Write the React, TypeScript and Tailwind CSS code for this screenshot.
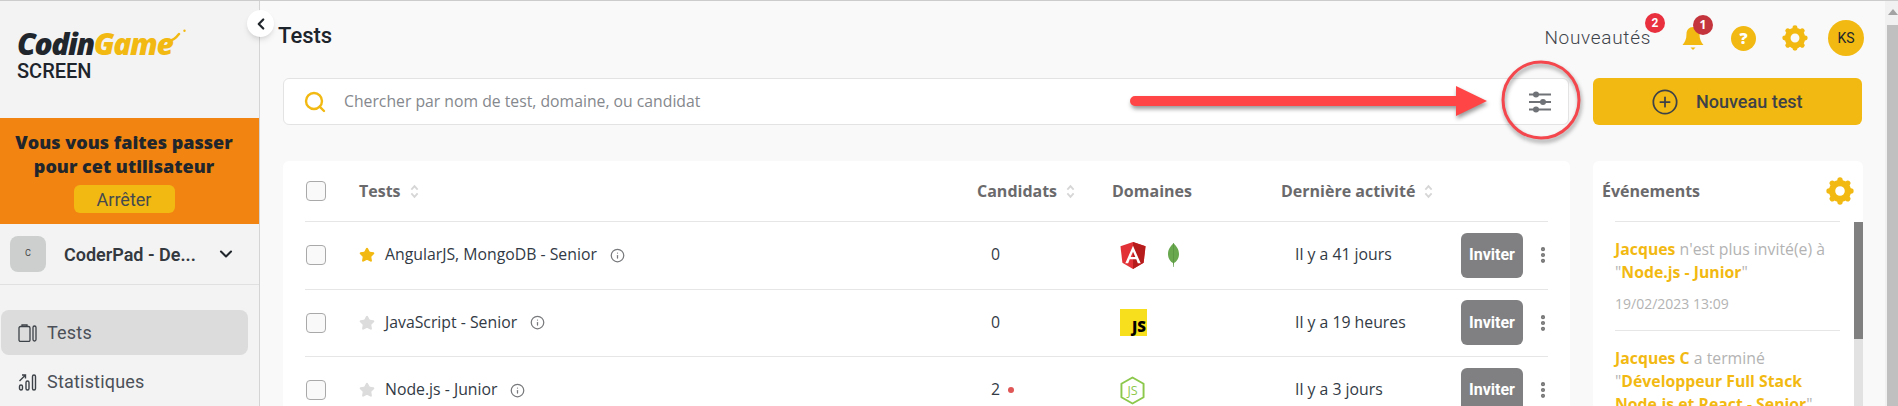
import * as React from "react";
import { ChevronDown, ChevronLeft, CirclePlus, EllipsisVertical, Info, Search, Star } from "lucide-react";

const Cog = ({ className }: { className: string }) => (
  <svg viewBox="0 0 24 24" className={className} fill="none" stroke="currentColor">
    <circle cx="12" cy="12" r="6.8" strokeWidth="5.4" />
    {[0, 45, 90, 135, 180, 225, 270, 315].map((a) => (
      <line key={a} x1="12" y1="2.6" x2="12" y2="3.6" strokeWidth="4.6" strokeLinecap="round" transform={`rotate(${a} 12 12)`} />
    ))}
  </svg>
);

const SortArrows = () => (
  <svg viewBox="0 0 10 16" className="ml-[9px] h-[15px] w-[9px] text-[#d6d6d6]" fill="none" stroke="currentColor" strokeWidth="2">
    <path d="M1.5 6 5 2l3.5 4M1.5 10 5 14l3.5-4" />
  </svg>
);

const Check = () => <div className="ml-px h-5 w-5 rounded-[4px] border border-[#a9a9a9] bg-[#f9f9f9]" />;

const Logo = () => (
  <div className="relative flex h-[27px] items-center font-['Open_Sans',sans-serif] text-[30px] leading-none font-extrabold tracking-[-1.4px] italic">
    <span className="text-[#20262c]">Codin</span>
    <span className="text-[#f2b912]">Game</span>
    <svg viewBox="0 0 20 14" className="absolute top-[-1px] left-[150px] h-[14px] w-5 text-[#f2b912]" fill="none" stroke="currentColor">
      <path d="M1 12C6 12 9 9 12 5" strokeWidth="2.4" strokeLinecap="round" />
      <circle cx="17.5" cy="1.8" r="1.2" fill="currentColor" stroke="none" />
    </svg>
  </div>
);

const Sidebar = () => (
  <aside className="flex h-full w-[260px] shrink-0 flex-col border-r border-[#d4d4d4] bg-[#f3f3f3] font-['Roboto',sans-serif]">
    <div className="h-[117px] shrink-0 pt-[29px] pl-[17px]">
      <Logo />
      <div className="mt-[3px] text-[20px] leading-[22px] font-medium text-[#1d242b]">SCREEN</div>
    </div>
    <div className="flex h-[106px] shrink-0 flex-col items-center bg-[#f28512] pt-[12px] pr-[11px]">
      <p className="text-center font-['Open_Sans',sans-serif] text-[18px] leading-[24px] font-extrabold whitespace-nowrap text-[#20262c]">
        Vous vous faites passer
        <br />
        pour cet utilisateur
      </p>
      <button className="mt-[7px] h-[28px] w-[101px] rounded-md bg-[#f2b912] text-[18px] text-[#45494e]">Arrêter</button>
    </div>
    <div className="flex h-[61px] shrink-0 items-center border-b border-[#e0e0e0] pl-[10px]">
      <div className="flex h-9 w-9 items-center justify-center rounded-lg bg-[#cdcfcf] text-[9px] text-[#444]">C</div>
      <span className="ml-[18px] w-[134px] text-[18px] font-semibold whitespace-nowrap text-[#34393f]">CoderPad - De...</span>
      <ChevronDown size={20} strokeWidth={2.5} className="ml-[18px] text-[#20262c]" />
    </div>
    <nav className="flex flex-col pt-[25px] pr-[11px] pl-px">
      <div className="flex h-[45px] items-center rounded-lg bg-[#dcdcdc] pl-[17px] text-[18px] tracking-[0.2px] text-[#4b5058]">
        <svg viewBox="0 0 19 18" className="mr-[10px] h-[18px] w-[19px] text-[#3d4248]" fill="none" stroke="currentColor" strokeWidth="1.3">
          <rect x="1" y="2.5" width="11" height="15" rx="1.5" />
          <path d="M4 2.5V1h5v1.500" />
          <rect x="15" y="2" width="3" height="15" rx="1.5" />
        </svg>
        Tests
      </div>
      <div className="mt-[4px] flex h-[45px] items-center pl-[17px] text-[18px] tracking-[0.2px] text-[#4b5058]">
        <svg viewBox="0 0 18 18" className="mr-[10px] h-[18px] w-[19px] text-[#3d4248]" fill="none" stroke="currentColor" strokeWidth="1.4">
          <rect x="1" y="12" width="3" height="5" rx="1.500" />
          <rect x="7.500" y="8" width="3" height="9" rx="1.500" />
          <rect x="14" y="2" width="3" height="15" rx="1.500" />
          <path d="M1 8 6.500 2.500M3.500 2h3.500v3.500" />
        </svg>
        Statistiques
      </div>
    </nav>
  </aside>
);

const Topbar = () => (
  <header className="flex h-[77px] shrink-0 items-center pr-[21px] pl-[18px]">
    <h1 className="mb-[8px] font-['Roboto',sans-serif] text-[22px] font-medium text-[#1d242b]">Tests</h1>
    <div className="mb-[3px] ml-auto flex items-center text-[#f2b912]">
      <div className="relative font-['Roboto',sans-serif] text-[19px] font-light tracking-[0.7px] text-[#3f444b]">
        Nouveautés
        <span className="absolute top-[-11px] right-[-14px] flex h-5 w-5 items-center justify-center rounded-full bg-[#e9303f] text-[12px] font-bold tracking-normal text-white">2</span>
      </div>
      <div className="relative ml-[30px] h-6 w-6">
        <svg viewBox="0 0 24 24" className="h-6 w-6" fill="currentColor">
          <path d="M12 1c4 0 6.500 3 6.500 7 0 5 1.500 8 4 11H1.500c2.500-3 4-6 4-11 0-4 2.500-7 6.500-7Z" />
          <path d="M9.500 21.500h5L12 24Z" />
        </svg>
        <span className="absolute top-[-11px] left-[12px] flex h-5 w-5 items-center justify-center rounded-full bg-[#c4343c] text-[12px] font-bold text-white">1</span>
      </div>
      <div className="ml-[26px] flex h-[25px] w-[25px] items-center justify-center rounded-full bg-[#f2b912] font-['Open_Sans',sans-serif] text-[16px] font-extrabold text-white">?</div>
      <Cog className="ml-[26px] h-[26px] w-[26px]" />
      <div className="ml-[20px] flex h-9 w-9 items-center justify-center rounded-full bg-[#f2b912] font-['Roboto',sans-serif] text-[14px] text-[#20262c]">KS</div>
    </div>
  </header>
);

const SearchRow = () => (
  <div className="flex shrink-0 gap-[24px] pr-[23px] pl-[23px]">
    <div className="flex h-[47px] flex-1 items-center rounded-md border border-[#e3e3e3] bg-white pl-[19px]">
      <Search size={24} strokeWidth={2.4} className="text-[#f2b912]" />
      <span className="ml-[17px] font-['Open_Sans',sans-serif] text-[15.75px] text-[#85888d]">Chercher par nom de test, domaine, ou candidat</span>
      <svg viewBox="0 0 24 24" className="mr-[16px] ml-auto h-[24px] w-[24px] text-[#6f7276]" fill="currentColor" stroke="currentColor">
        <path d="M1 4.500h22M1 12h22M1 19.500h22" strokeWidth="1.800" fill="none" />
        <circle cx="8" cy="4.500" r="3" stroke="none" />
        <circle cx="15" cy="12" r="3" stroke="none" />
        <circle cx="8" cy="19.500" r="3" stroke="none" />
      </svg>
    </div>
    <button className="flex h-[47px] w-[269px] items-center rounded-md bg-[#f2b912] pl-[58px] font-['Roboto',sans-serif] text-[18px] font-medium text-[#3d4248]">
      <CirclePlus size={28} strokeWidth={1.500} />
      <span className="ml-[17px]">Nouveau test</span>
    </button>
  </div>
);

const AngularIcon = () => (
  <svg viewBox="0 0 26 28" className="h-[27px] w-[26px]">
    <path d="M13 0 0 4.500l2 17L13 28l11-6.500 2-17Z" fill="#e23237" />
    <path d="M13 0v28l11-6.500 2-17Z" fill="#b71c1c" />
    <path d="M13 4 5 22h3l1.600-4h6.800l1.600 4h3Zm-2.400 11.500L13 10l2.400 5.500Z" fill="#fff" />
  </svg>
);

const LeafIcon = () => (
  <svg viewBox="0 0 11 24" className="ml-[22px] h-6 w-[11px]">
    <path d="M5.500 0C8 3 11 6 11 11c0 5-3 8-5 9l-.5 4-.5-4c-2-1-5-4-5-9C0 6 3 3 5.500 0Z" fill="#69a84f" />
    <path d="M5.500 0v24" stroke="#4f8a3a" strokeWidth=".5" />
  </svg>
);

const JsIcon = () => (
  <div className="flex h-[27px] w-[27px] items-end justify-end bg-[#f7df1e] pr-px font-['Open_Sans',sans-serif] text-[15px] leading-[19px] font-extrabold text-black">JS</div>
);

const NodeIcon = () => (
  <svg viewBox="0 0 26 30" className="h-[29px] w-[25px]">
    <path d="M13 1.500 24.500 8v14L13 28.500 1.500 22V8Z" fill="none" stroke="#8cc84b" strokeWidth="2" strokeLinejoin="round" />
    <text x="13" y="20" textAnchor="middle" fontFamily="Open Sans, sans-serif" fontSize="13" fill="#8cc84b">JS</text>
  </svg>
);

const rows = [
  { name: "AngularJS, MongoDB - Senior", fav: true, count: "0", dot: false, icons: <><AngularIcon /><LeafIcon /></>, last: "Il y a 41 jours" },
  { name: "JavaScript - Senior", fav: false, count: "0", dot: false, icons: <JsIcon />, last: "Il y a 19 heures" },
  { name: "Node.js - Junior", fav: false, count: "2", dot: true, icons: <NodeIcon />, last: "Il y a 3 jours" },
];

const gridCols = "grid grid-cols-[54px_618px_135px_169px_180px_1fr] items-center";

const TestsTable = () => (
  <section className="w-[1287px] shrink-0 rounded-t-md bg-white px-[22px] font-['Open_Sans',sans-serif] text-[15.8px] text-[#323a45]">
    <div className={`${gridCols} h-[61px] border-b border-[#e6e6e6] text-[16px] font-bold text-[#6a6a6c]`}>
      <Check />
      <div className="flex items-center">Tests<SortArrows /></div>
      <div className="flex items-center">Candidats<SortArrows /></div>
      <div>Domaines</div>
      <div className="flex items-center">Dernière activité<SortArrows /></div>
      <div />
    </div>
    {rows.map((r) => (
      <div key={r.name} className={`${gridCols} h-[67.5px] shrink-0 border-b border-[#e6e6e6]`}>
        <Check />
        <div className="flex items-center">
          <Star size={16} fill="currentColor" strokeLinejoin="round" className={r.fav ? "text-[#f2b912]" : "text-[#dcdcdc]"} />
          <span className="ml-[10px]">{r.name}</span>
          <Info size={15} strokeWidth={2} className="ml-[13px] text-[#77797c]" />
        </div>
        <div className="flex items-center pl-[14px]">
          {r.count}
          {r.dot && <span className="ml-[8px] h-[6px] w-[6px] rounded-full bg-[#e05555]" />}
        </div>
        <div className="flex items-center pl-2">{r.icons}</div>
        <div className="pl-[14px]">{r.last}</div>
        <div className="flex items-center">
          <button className="h-[45px] w-[62px] rounded-md bg-[#808082] font-['Roboto',sans-serif] text-[16px] font-bold text-white">Inviter</button>
          <EllipsisVertical size={20} strokeWidth={3} className="ml-[10px] text-[#747474]" />
        </div>
      </div>
    ))}
  </section>
);

const EventsPanel = () => (
  <section className="flex w-[270px] shrink-0 flex-col rounded-t-md bg-white font-['Open_Sans',sans-serif] text-[15.8px] leading-[23px] text-[#b3b3b3]">
    <div className="flex h-[60px] shrink-0 items-center pr-[9px] pl-[9px]">
      <h2 className="text-[16px] font-bold text-[#6a6a6c]">Événements</h2>
      <Cog className="ml-auto h-7 w-7 text-[#f2b912]" />
    </div>
    <div className="flex flex-1">
      <div className="ml-[22px] flex-1">
        <div className="mr-[14px] border-t border-b border-[#e6e6e6] pt-[16px] pb-[16px]">
          <p><b className="text-[#f2b912]">Jacques</b> n'est plus invité(e) à "<b className="text-[#f2b912]">Node.js - Junior</b>"</p>
          <p className="mt-[10px] text-[14px] leading-[20px]">19/02/2023 13:09</p>
        </div>
        <div className="mr-[9px] pt-[16px]">
          <p><b className="text-[#f2b912]">Jacques C</b> a terminé "<b className="text-[#f2b912]">Développeur Full Stack Node.js et React - Senior</b>"</p>
        </div>
      </div>
      <div className="mt-px w-[9px] bg-[#e2e2e2]">
        <div className="h-[117px] bg-[#808080]" />
      </div>
    </div>
  </section>
);

// flèche et cercle rouges posés par-dessus la capture
const Annotation = () => (
  <svg className="pointer-events-none absolute top-0 left-0 h-[406px] w-[1898px]" viewBox="0 0 1898 406" fill="none">
    <g className="drop-shadow-[1px_3px_2px_rgba(0,0,0,0.4)]">
      <path d="M1135 95H1456V85L1487 100 1456 115V105H1135a5 5 0 0 1 0-10Z" fill="#ff4545" />
      <ellipse cx="1541" cy="99" rx="38" ry="38" stroke="#f4474d" strokeWidth="3" />
    </g>
  </svg>
);

export default function App() {
  return (
    <div className="relative h-[406px] w-[1898px] overflow-hidden border-t border-[#cccccc] bg-[#f9f9f9]">
      <div className="flex h-full">
        <Sidebar />
        <main className="flex min-w-0 flex-1 flex-col">
          <Topbar />
          <SearchRow />
          <div className="mt-[36px] flex shrink-0 gap-[23px] pl-[23px]">
            <TestsTable />
            <EventsPanel />
          </div>
        </main>
        <div className="relative w-[13px] shrink-0 bg-[#f1f1f1]">
          <div className="absolute top-[8px] left-[3px] h-0 w-0 border-x-[5px] border-b-[6px] border-x-transparent border-b-[#a3a3a3]" />
          <div className="mt-[24px] ml-[2px] h-full bg-[#c0c0c0]" />
        </div>
      </div>
      <button className="absolute top-[9px] left-[247px] flex h-[27px] w-[27px] items-center justify-center rounded-full bg-white shadow-md">
        <ChevronLeft size={18} strokeWidth={3} className="text-[#20262c]" />
      </button>
      <Annotation />
    </div>
  );
}
